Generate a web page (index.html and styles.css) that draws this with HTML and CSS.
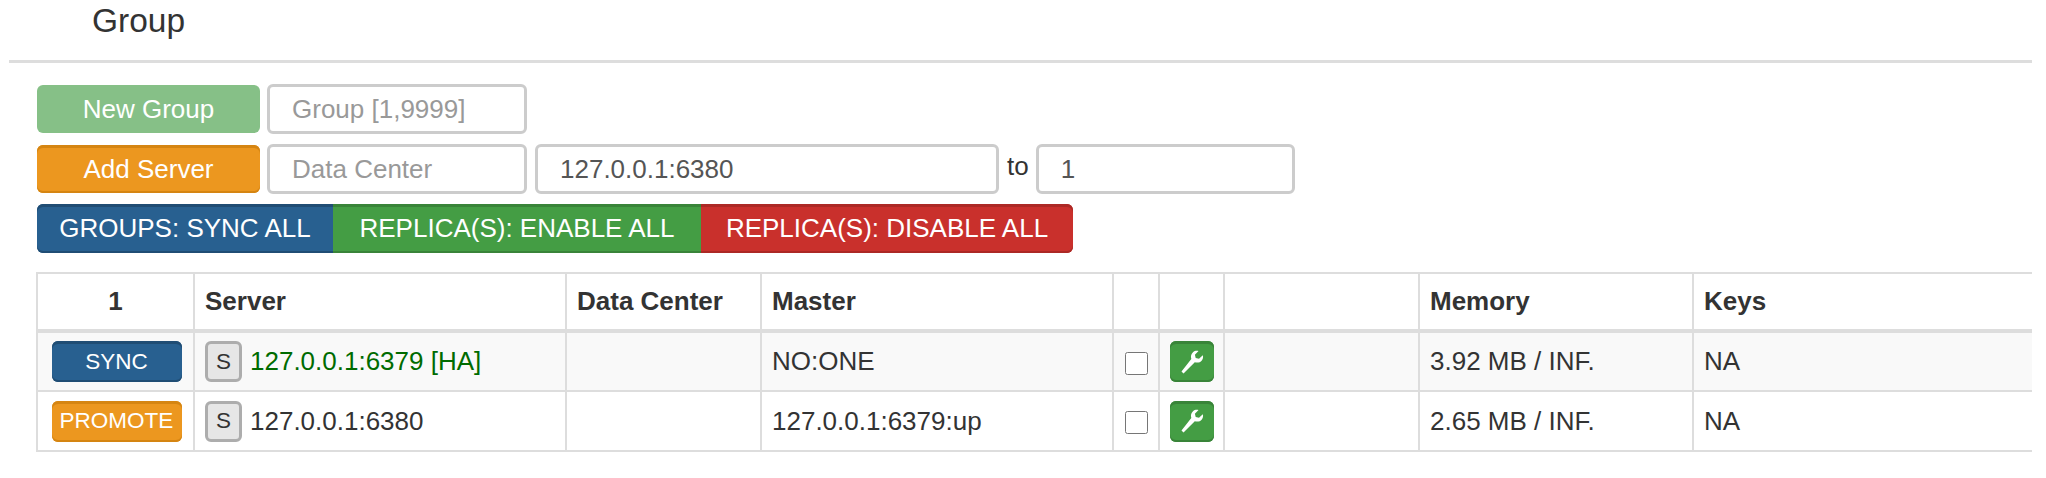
FILE: index.html
```html
<!DOCTYPE html>
<html lang="en">
  <head>
    <meta charset="UTF-8" />
    <title>Group</title>
    <link rel="stylesheet" href="styles.css">
  </head>
  <body>
    <div class="container">
      <h3>Group</h3>
      <hr />
      <div class="controls">
        <div class="form-row">
          <button class="btn btn-new">New Group</button>
          <input class="input-small" type="text" placeholder="Group [1,9999]" />
        </div>
        <div class="form-row">
          <button class="btn btn-warning btn-new">Add Server</button>
          <input class="input-small" type="text" placeholder="Data Center" />
          <input class="input-addr" type="text" value="127.0.0.1:6380" />
          <span class="to">to</span>
          <input class="input-small input-to" type="text" value="1" />
        </div>
        <div class="btn-group">
          <button class="btn btn-primary">GROUPS: SYNC ALL</button>
          <button class="btn btn-success">REPLICA(S): ENABLE ALL</button>
          <button class="btn btn-danger">REPLICA(S): DISABLE ALL</button>
        </div>
      </div>
      <table>
        <colgroup>
          <col class="c-action" />
          <col class="c-server" />
          <col class="c-dc" />
          <col class="c-master" />
          <col class="c-check" />
          <col class="c-tool" />
          <col class="c-blank" />
          <col class="c-memory" />
          <col class="c-keys" />
        </colgroup>
        <thead>
          <tr>
            <th class="center">1</th>
            <th>Server</th>
            <th>Data Center</th>
            <th>Master</th>
            <th></th>
            <th></th>
            <th></th>
            <th>Memory</th>
            <th>Keys</th>
          </tr>
        </thead>
        <tbody>
          <tr class="odd">
            <td class="center"><button class="btn-xs btn-action btn-primary">SYNC</button></td>
            <td><button class="btn-s">S</button><span class="addr ha">127.0.0.1:6379 [HA]</span></td>
            <td></td>
            <td>NO:ONE</td>
            <td class="center"><input class="check" type="checkbox" /></td>
            <td class="center">
              <button class="btn-xs btn-success btn-tool">
                <svg viewBox="0 0 24 24" width="24" height="24"><path d="M1.5 21.5l2 2 11.3-11.3c2.600.9 5.400.2 7-1.800 1.200-1.600 1.600-3.400 1-5.200l-3.800 3.600-3.300-.9-.8-3.200 3.600-3.700c-2-.5-4-.1-5.500 1.200-1.900 1.600-2.500 4.300-1.700 6.700z" fill="#fff"/></svg>
              </button>
            </td>
            <td></td>
            <td>3.92 MB / INF.</td>
            <td>NA</td>
          </tr>
          <tr>
            <td class="center"><button class="btn-xs btn-action btn-warning">PROMOTE</button></td>
            <td><button class="btn-s">S</button><span class="addr">127.0.0.1:6380</span></td>
            <td></td>
            <td>127.0.0.1:6379:up</td>
            <td class="center"><input class="check" type="checkbox" /></td>
            <td class="center">
              <button class="btn-xs btn-success btn-tool">
                <svg viewBox="0 0 24 24" width="24" height="24"><path d="M1.5 21.5l2 2 11.3-11.3c2.600.9 5.400.2 7-1.800 1.200-1.600 1.600-3.400 1-5.200l-3.800 3.600-3.300-.9-.8-3.200 3.600-3.700c-2-.5-4-.1-5.500 1.200-1.900 1.600-2.500 4.300-1.700 6.700z" fill="#fff"/></svg>
              </button>
            </td>
            <td></td>
            <td>2.65 MB / INF.</td>
            <td>NA</td>
          </tr>
        </tbody>
      </table>
    </div>
  </body>
</html>
```

FILE: styles.css
```css
* {
  box-sizing: border-box;
}
body {
  margin: 0;
  background: #fff;
  color: #333;
  font-family: "Liberation Sans", Arial, sans-serif;
  font-size: 26px;
}
.container {
  width: 2023px;
  margin-left: 9px;
  overflow: hidden;
}
h3 {
  margin: 0;
  padding-left: 83px;
  height: 60px;
  font-size: 33.5px;
  line-height: 42px;
  font-weight: 400;
}
hr {
  margin: 0 0 21px;
  border: 0;
  border-top: 3px solid #ddd;
}
.controls {
  margin-left: 28px;
}
.form-row {
  display: flex;
  align-items: center;
  height: 50px;
  margin-bottom: 10px;
}
.btn {
  height: 49px;
  padding: 0;
  border: 0;
  color: #fff;
  font: inherit;
  white-space: nowrap;
}
.btn-new {
  width: 223px;
  height: 48px;
  margin-right: 7px;
  border-radius: 6px;
  background: #86c087;
}
.btn-warning {
  background: #ec971f;
  box-shadow: inset 0 3px 0 #d58512, inset 0 -2px 0 #d58512;
}
.btn-primary {
  background: #286090;
  box-shadow: inset 0 3px 0 #204d74, inset 0 -2px 0 #204d74;
}
.btn-success {
  background: #449d44;
  box-shadow: inset 0 3px 0 #398439, inset 0 -2px 0 #398439;
}
.btn-danger {
  background: #c9302c;
  box-shadow: inset 0 3px 0 #ac2925, inset 0 -2px 0 #ac2925;
}
input[type="text"] {
  height: 50px;
  padding: 0 22px;
  border: 3px solid #ccc;
  border-radius: 6px;
  color: #555;
  font: inherit;
}
input::placeholder {
  color: #999;
  opacity: 1;
}
.input-small {
  width: 260px;
}
.input-addr {
  width: 464px;
  margin-left: 8px;
}
.to {
  margin: 0 7px 6px 8px;
}
.input-to {
  width: 259px;
}
.btn-group {
  display: flex;
  height: 49px;
  margin-bottom: 19px;
}
.btn-group .btn:first-child {
  width: 296px;
  border-radius: 6px 0 0 6px;
}
.btn-group .btn:nth-child(2) {
  width: 368px;
}
.btn-group .btn:last-child {
  width: 372px;
  border-radius: 0 6px 6px 0;
}
table {
  width: 2040px;
  margin-left: 27px;
  table-layout: fixed;
  border-collapse: collapse;
}
.c-action { width: 157px; }
.c-server { width: 372px; }
.c-dc { width: 195px; }
.c-master { width: 352px; }
.c-check { width: 46px; }
.c-tool { width: 65px; }
.c-blank { width: 195px; }
.c-memory { width: 274px; }
th,
td {
  padding: 0 10px;
  border: 2px solid #ddd;
  text-align: left;
}
th {
  height: 58px;
  border-bottom-width: 4px;
  font-weight: 700;
}
td {
  height: 60px;
}
.center {
  text-align: center;
}
.odd {
  background: #f9f9f9;
}
.btn-xs {
  width: 130px;
  height: 41px;
  padding: 0;
  border: 0;
  border-radius: 6px;
  color: #fff;
  font: inherit;
  font-size: 22.5px;
  vertical-align: middle;
}
.btn-action {
  margin-left: 2px;
}
.btn-s {
  width: 37px;
  height: 41px;
  padding: 0;
  border: 3px solid #adadad;
  border-radius: 6px;
  background: #e6e6e6;
  color: #333;
  font: inherit;
  font-size: 22.5px;
  vertical-align: middle;
}
.btn-tool {
  display: inline-flex;
  align-items: center;
  justify-content: center;
  width: 44px;
  margin-right: 2px;
}
.addr {
  margin-left: 8px;
  vertical-align: middle;
}
.ha {
  color: #006b00;
}
.check {
  width: 23px;
  height: 23px;
  margin: 0;
  vertical-align: middle;
}
```
